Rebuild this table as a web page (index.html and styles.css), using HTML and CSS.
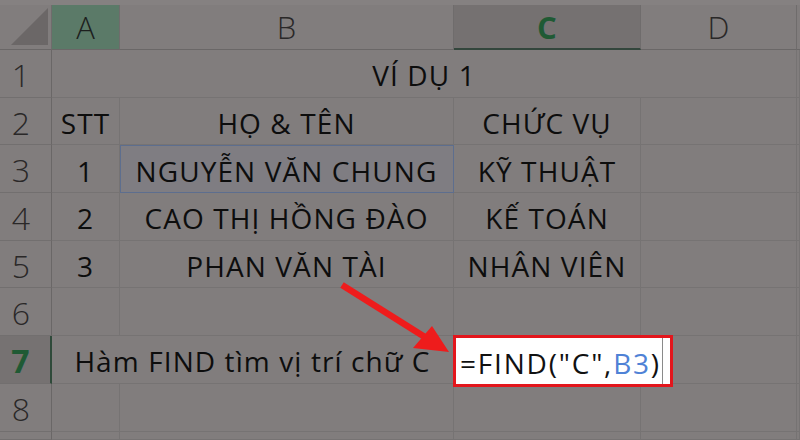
FILE: index.html
```html
<!DOCTYPE html>
<html lang="vi">
<head>
<meta charset="utf-8">
<link rel="stylesheet" href="styles.css">
</head>
<body>
<div class="sheet">
  <div class="topband"></div>

  <div class="hd corner"><svg class="tri" width="40" height="40" viewBox="0 0 40 40"><polygon points="2,39 39,39 39,2" fill="#6b6767"/></svg></div>
  <div class="hd col sel-green">A</div>
  <div class="hd col">B</div>
  <div class="hd col sel-c">C</div>
  <div class="hd col">D</div>
  <div class="hd col e"></div>

  <div class="rh">1</div>
  <div class="c span4">VÍ DỤ 1</div>
  <div class="c e"></div>

  <div class="rh">2</div>
  <div class="c">STT</div>
  <div class="c">HỌ &amp; TÊN</div>
  <div class="c">CHỨC VỤ</div>
  <div class="c"></div>
  <div class="c e"></div>

  <div class="rh">3</div>
  <div class="c">1</div>
  <div class="c b3">NGUYỄN VĂN CHUNG</div>
  <div class="c">KỸ THUẬT</div>
  <div class="c"></div>
  <div class="c e"></div>

  <div class="rh">4</div>
  <div class="c">2</div>
  <div class="c">CAO THỊ HỒNG ĐÀO</div>
  <div class="c">KẾ TOÁN</div>
  <div class="c"></div>
  <div class="c e"></div>

  <div class="rh">5</div>
  <div class="c">3</div>
  <div class="c">PHAN VĂN TÀI</div>
  <div class="c">NHÂN VIÊN</div>
  <div class="c"></div>
  <div class="c e"></div>

  <div class="rh">6</div>
  <div class="c"></div>
  <div class="c"></div>
  <div class="c"></div>
  <div class="c"></div>
  <div class="c e"></div>

  <div class="rh active">7</div>
  <div class="c span2">Hàm FIND tìm vị trí chữ C</div>
  <div class="c edit-cell">
    <div class="editbox"><span>=FIND("C",</span><span class="ref">B3</span><span>)</span><i class="caret"></i></div>
  </div>
  <div class="c"></div>
  <div class="c e"></div>

  <div class="rh">8</div>
  <div class="c"></div>
  <div class="c"></div>
  <div class="c"></div>
  <div class="c"></div>
  <div class="c e"></div>

  <div class="rh"></div>
  <div class="c"></div>
  <div class="c"></div>
  <div class="c"></div>
  <div class="c"></div>
  <div class="c e"></div>

  <svg class="arrow" width="800" height="440" viewBox="0 0 800 440">
    <line x1="342" y1="285" x2="428" y2="339" stroke="#ee1c1c" stroke-width="6.5" stroke-linecap="butt"/>
    <polygon points="449,352 413,348 432,326" fill="#ee1c1c"/>
  </svg>
</div>
</body>
</html>
```

FILE: styles.css
```css
* { box-sizing: border-box; }
html, body { margin: 0; padding: 0; }
body {
  width: 800px;
  height: 440px;
  overflow: hidden;
  background: #817d7d;
  font-family: "Open Sans", "Noto Sans", sans-serif;
  color: #101010;
}
.sheet {
  position: relative;
  display: grid;
  grid-template-columns: 52px 68px 334px 187px 156px 3px;
  grid-template-rows: 5px 45px repeat(8, 47.7px) 1fr;
  width: 800px;
  height: 440px;
  overflow: hidden;
  background: #817d7d;
}
.topband {
  grid-column: 1 / -1;
  background: #858181;
}
.hd {
  display: flex;
  align-items: center;
  justify-content: center;
  border-right: 1px solid #6f6c6c;
  border-bottom: 1px solid #6a6767;
  font-weight: 300;
  font-size: 31px;
  color: #2a2828;
}
.corner {
  justify-content: flex-end;
  align-items: flex-end;
  padding: 0 2px 3px 0;
}
.tri { display: block; }
.sel-green {
  background: #5b7a68;
  color: #1d1f1e;
}
.sel-c {
  background: #757171;
  color: #1f5a34;
  font-weight: 700;
  border-bottom: 2px solid #33463c;
}
.e { border-right: none; }
.rh {
  display: flex;
  align-items: center;
  justify-content: center;
  padding: 2px 9px 0 0;
  border-right: 1px solid #6a6767;
  border-bottom: 1px solid #726f6f;
  font-weight: 300;
  font-size: 32px;
  color: #2a2828;
}
.rh.active {
  background: #767272;
  color: #1f5a34;
  font-weight: 700;
  border-right: 2px solid #2f4a3a;
}
.c {
  display: flex;
  align-items: center;
  justify-content: center;
  padding-top: 4px;
  border-right: 1px solid #767373;
  border-bottom: 1px solid #767373;
  font-size: 28px;
  letter-spacing: 1.1px;
  white-space: nowrap;
  color: #0d0d0d;
}
.span4 { grid-column: span 4; }
.span2 { grid-column: span 2; }
.b3 {
  outline: 1.5px solid #5d6e8e;
  outline-offset: -1px;
  background: #7f7d82;
}
.edit-cell {
  position: relative;
  justify-content: flex-start;
}
.editbox {
  position: absolute;
  left: -1px;
  top: -1px;
  width: 220px;
  height: 52px;
  background: #fff;
  border: 3px solid #e3161c;
  display: flex;
  align-items: center;
  padding: 3px 0 0 4px;
  font-size: 28px;
  letter-spacing: 1.8px;
  color: #111;
  z-index: 2;
}
.ref { color: #4f82d6; }
.caret {
  align-self: stretch;
  width: 1px;
  margin: -3px 0 0 1px;
  background: #8a8a8a;
}
.arrow {
  position: absolute;
  left: 0;
  top: 0;
  pointer-events: none;
  z-index: 3;
}
```
